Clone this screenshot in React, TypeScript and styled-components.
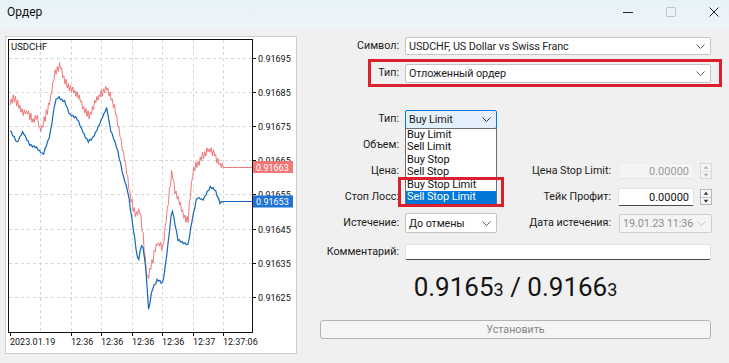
import styled, { createGlobalStyle } from "styled-components";

const GlobalStyle = createGlobalStyle`
  html, body {
    margin: 0;
    padding: 0;
    background: #f0f0f0;
  }
  body {
    font-family: Roboto, "Liberation Sans", Arial, sans-serif;
    font-size: 10.7px;
    color: #1b1b1b;
  }
`;

const Window = styled.div`
  width: 729px;
  height: 363px;
  overflow: hidden;
  background: #f0f0f0;
  display: flex;
  flex-direction: column;
`;

const TitleBar = styled.div`
  height: 30px;
  flex: none;
  display: flex;
  justify-content: space-between;
  align-items: flex-start;
  background: linear-gradient(#e5f1f8, #edf5f9 75%, #f0f2f3);
`;

const Title = styled.div`
  padding: 5px 0 0 7px;
  font-size: 12px;
  line-height: 14px;
  color: #111;
`;

const Controls = styled.div`
  display: flex;
  gap: 13px;
`;

const CtrlButton = styled.div`
  width: 30px;
  height: 24px;
  display: flex;
  align-items: center;
  justify-content: center;
`;

const Content = styled.div`
  display: flex;
  padding: 6px 0 0 5px;
`;

const ChartPanel = styled.div`
  width: 290px;
  height: 316px;
  flex: none;
  background: #fff;
  border: 1px solid #cdcdcd;
  svg {
    display: block;
  }
`;

const Form = styled.div`
  margin-left: 23px;
  width: 391px;
  display: flex;
  flex-direction: column;
`;

const Row = styled.div<{ $h: number; $mt?: number }>`
  display: flex;
  align-items: center;
  height: ${(p) => p.$h}px;
  margin-top: ${(p) => p.$mt ?? 0}px;
  position: relative;
`;

const RedFrame = styled.div`
  display: flex;
  align-items: center;
  box-sizing: border-box;
  height: 28px;
  margin: 3px -11px 0 48px;
  border: 3px solid #d9202c;
`;

const Label = styled.div<{ $w?: number; $gap?: number }>`
  width: ${(p) => p.$w ?? 79}px;
  flex: none;
  margin-right: ${(p) => p.$gap ?? 6}px;
  text-align: right;
  white-space: nowrap;
  line-height: 14px;
`;

type Variant = "normal" | "open" | "disabled";

const Select = styled.div<{ $w: number; $h?: number; $variant?: Variant }>`
  position: relative;
  width: ${(p) => p.$w}px;
  height: ${(p) => p.$h ?? 19}px;
  flex: none;
  box-sizing: border-box;
  display: flex;
  align-items: center;
  justify-content: space-between;
  padding: 0 5px 0 3px;
  border-radius: 2px;
  white-space: nowrap;
  border: 1px solid
    ${(p) =>
      p.$variant === "open" ? "#0078d7" : p.$variant === "disabled" ? "#cfcfcf" : "#c4c4c4"};
  background: ${(p) =>
    p.$variant === "open" ? "#e3effa" : p.$variant === "disabled" ? "#f4f4f4" : "#ffffff"};
  color: ${(p) => (p.$variant === "disabled" ? "#8e8e8e" : "#1b1b1b")};
  font-size: 10.8px;
  letter-spacing: -0.1px;
`;

const DropList = styled.div`
  position: absolute;
  top: 100%;
  left: -1px;
  width: 92px;
  box-sizing: border-box;
  border: 1px solid #6e6e6e;
  background: #fff;
  z-index: 2;
`;

const DropItem = styled.div<{ $active?: boolean }>`
  height: 12.5px;
  line-height: 12.5px;
  padding-left: 1px;
  font-size: 11px;
  color: ${(p) => (p.$active ? "#fff" : "#111")};
  background: ${(p) => (p.$active ? "#0078d7" : "transparent")};
`;

const Highlight = styled.div`
  position: absolute;
  left: -8px;
  top: 48px;
  width: 106px;
  height: 30px;
  box-sizing: border-box;
  border: 3px solid #d9202c;
  pointer-events: none;
`;

const Input = styled.div<{ $w: number; $h?: number; $disabled?: boolean }>`
  width: ${(p) => p.$w}px;
  height: ${(p) => p.$h ?? 18}px;
  flex: none;
  box-sizing: border-box;
  display: flex;
  align-items: center;
  justify-content: flex-end;
  padding-right: 4px;
  font-size: 11px;
  background: ${(p) => (p.$disabled ? "#f4f4f4" : "#fff")};
  color: ${(p) => (p.$disabled ? "#9a9a9a" : "#111")};
  border: 1px solid ${(p) => (p.$disabled ? "#ececec" : "#e2e2e2")};
  border-bottom-color: ${(p) => (p.$disabled ? "#e4e4e4" : "#4a4a4a")};
  border-radius: 2px;
`;

const Spinner = styled.div<{ $disabled?: boolean }>`
  width: 12px;
  height: 16px;
  margin-left: 6px;
  flex: none;
  box-sizing: border-box;
  display: flex;
  flex-direction: column;
  border: 1px solid ${(p) => (p.$disabled ? "#d8d8d8" : "#b8b8b8")};
  background: ${(p) => (p.$disabled ? "#f4f4f4" : "#f7f7f7")};
  svg {
    display: block;
    flex: 1;
  }
`;

const PriceLine = styled.div`
  margin-top: 7px;
  height: 30px;
  line-height: 30px;
  text-align: center;
  font-size: 26px;
  color: #141414;
`;

const SmallDigit = styled.span`
  font-size: 18px;
`;

const SubmitButton = styled.div`
  margin-top: 18px;
  height: 19px;
  box-sizing: border-box;
  border: 1px solid #b4b4b4;
  border-radius: 3px;
  background: #f5f5f5;
  color: #858585;
  display: flex;
  align-items: center;
  justify-content: center;
  font-size: 10.7px;
`;

function Chevron({ color = "#606060" }: { color?: string }) {
  return (
    <svg width="9" height="5" viewBox="0 0 9 5">
      <polyline points="0.5,0.5 4.5,4.5 8.5,0.5" fill="none" stroke={color} strokeWidth="1" />
    </svg>
  );
}

function SpinBox({ disabled }: { disabled?: boolean }) {
  const c = disabled ? "#b0b0b0" : "#333";
  return (
    <Spinner $disabled={disabled}>
      <svg viewBox="0 0 10 7">
        <polygon points="2.5,5 7.5,5 5,2" fill={c} />
      </svg>
      <svg viewBox="0 0 10 7" style={{ borderTop: `1px solid ${disabled ? "#dedede" : "#c6c6c6"}` }}>
        <polygon points="2.5,2 7.5,2 5,5" fill={c} />
      </svg>
    </Spinner>
  );
}

// ---- chart data ----
type Pt = [number, number];

const redKeys: Pt[] = [
  [10, 102], [15, 98], [20, 110], [27, 112], [33, 120], [37, 117], [40, 132], [45, 118],
  [50, 102], [55, 72], [60, 65], [65, 82], [70, 88], [75, 92], [80, 98], [85, 112],
  [90, 115], [97, 98], [103, 92], [107, 88], [110, 94], [113, 102], [117, 118], [120, 135],
  [125, 162], [130, 195], [135, 215], [140, 210], [143, 235], [147, 280], [152, 263],
  [157, 243], [163, 247], [167, 213], [172, 170], [175, 190], [180, 205], [185, 218],
  [188, 222], [190, 200], [193, 170], [200, 160], [207, 150], [213, 152], [220, 165], [223, 167],
];

const blueKeys: Pt[] = [
  [10, 130], [17, 142], [23, 132], [30, 145], [37, 148], [43, 155], [50, 135], [55, 102],
  [58, 97], [65, 102], [70, 115], [77, 118], [83, 132], [88, 142], [93, 138], [100, 123],
  [107, 107], [110, 128], [117, 148], [123, 175], [128, 192], [133, 227], [138, 262],
  [142, 243], [145, 260], [147, 283], [148, 313], [152, 290], [157, 280], [163, 283],
  [167, 253], [172, 208], [178, 240], [183, 243], [188, 245], [192, 220], [197, 197],
  [203, 200], [210, 187], [215, 190], [220, 203], [223, 201],
];

function interp(keys: Pt[], x: number) {
  for (let i = 1; i < keys.length; i++) {
    const [x0, y0] = keys[i - 1];
    const [x1, y1] = keys[i];
    if (x <= x1) return y0 + ((y1 - y0) * (x - x0)) / (x1 - x0);
  }
  return keys[keys.length - 1][1];
}

function linePath(keys: Pt[], amp: number, step: number, seed: number, endY: number) {
  let s = seed;
  const rnd = () => {
    s = (s * 1103515245 + 12345) & 0x7fffffff;
    return s / 0x7fffffff;
  };
  const pts: string[] = [];
  let i = 0;
  for (let x = 10; x < 223; x += step, i++) {
    const dir = i % 2 ? -1 : 1;
    const y = interp(keys, x) + dir * (0.3 + rnd()) * amp;
    pts.push(`${x.toFixed(1)},${y.toFixed(1)}`);
  }
  pts.push(`223,${endY}`, `253,${endY}`);
  return "M" + pts.join(" L");
}

const priceLevels = [
  { y: 58, t: "0.91695" },
  { y: 92, t: "0.91685" },
  { y: 126, t: "0.91675" },
  { y: 160, t: "0.91665" },
  { y: 194, t: "0.91655" },
  { y: 229, t: "0.91645" },
  { y: 263, t: "0.91635" },
  { y: 297, t: "0.91625" },
];

const vGrid = [40, 71, 101, 132, 162, 193, 223];

const timeLabels = [
  { x: 10, t: "2023.01.19" },
  { x: 71, t: "12:36" },
  { x: 101, t: "12:36" },
  { x: 132, t: "12:36" },
  { x: 162, t: "12:36" },
  { x: 193, t: "12:37" },
  { x: 223, t: "12:37:06" },
];

function Chart() {
  const font = "Roboto, 'Liberation Sans', sans-serif";
  return (
    <svg width={290} height={316} viewBox="6 37 290 316">
      {vGrid.map((x) => (
        <line key={x} x1={x + 0.5} y1={40} x2={x + 0.5} y2={332} stroke="#d6d6d6" strokeDasharray="3 3" />
      ))}
      {priceLevels.map((p) => (
        <line key={p.t} x1={9} y1={p.y + 0.5} x2={252} y2={p.y + 0.5} stroke="#d6d6d6" strokeDasharray="3 3" />
      ))}
      <path d={linePath(redKeys, 3.6, 1.1, 7, 167.5)} fill="none" stroke="#ec6b6b" strokeWidth={0.9} />
      <path d={linePath(blueKeys, 1, 1.4, 19, 201.5)} fill="none" stroke="#1566b8" strokeWidth={1.2} />
      <rect x={8.5} y={39.5} width={244} height={293} fill="none" stroke="#111" />
      {priceLevels.map((p) => (
        <g key={p.t}>
          <line x1={252.5} y1={p.y + 0.5} x2={256} y2={p.y + 0.5} stroke="#111" />
          <text x={258} y={p.y + 3.5} fontSize={9} fontFamily={font} fill="#111">
            {p.t}
          </text>
        </g>
      ))}
      {timeLabels.map((l) => (
        <g key={l.x}>
          <line x1={l.x + 0.5} y1={332} x2={l.x + 0.5} y2={336} stroke="#111" />
          <text x={l.x} y={345} fontSize={9} fontFamily={font} fill="#111">
            {l.t}
          </text>
        </g>
      ))}
      <rect x={253} y={161} width={40} height={12} fill="#f27777" />
      <text x={256} y={170.5} fontSize={9} fontFamily={font} fill="#fff">
        0.91663
      </text>
      <rect x={253} y={195.5} width={40} height={12} fill="#1f72d6" />
      <text x={256} y={205} fontSize={9} fontFamily={font} fill="#fff">
        0.91653
      </text>
      <text x={11} y={50} fontSize={9.5} fontFamily={font} fill="#111">
        USDCHF
      </text>
    </svg>
  );
}

export default function App() {
  return (
    <Window>
      <GlobalStyle />
      <TitleBar>
        <Title>Ордер</Title>
        <Controls>
          <CtrlButton>
            <svg width="10" height="10" viewBox="0 0 10 10">
              <line x1="0" y1="5.5" x2="10" y2="5.5" stroke="#222" />
            </svg>
          </CtrlButton>
          <CtrlButton>
            <svg width="10" height="10" viewBox="0 0 10 10">
              <rect x="0.5" y="0.5" width="9" height="9" rx="1" fill="none" stroke="#c2c2c2" />
            </svg>
          </CtrlButton>
          <CtrlButton>
            <svg width="10" height="10" viewBox="0 0 10 10">
              <path d="M0.5 0.5 L9.5 9.5 M9.5 0.5 L0.5 9.5" stroke="#222" />
            </svg>
          </CtrlButton>
        </Controls>
      </TitleBar>

      <Content>
        <ChartPanel>
          <Chart />
        </ChartPanel>

        <Form>
          <Row $h={20}>
            <Label>Символ:</Label>
            <Select $w={306} $h={18}>
              USDCHF, US Dollar vs Swiss Franc
              <Chevron />
            </Select>
          </Row>

          <RedFrame>
            <Label $w={28}>Тип:</Label>
            <Select $w={306}>
              Отложенный ордер
              <Chevron />
            </Select>
          </RedFrame>

          <Row $h={22} $mt={21}>
            <Label>Тип:</Label>
            <Select $w={92} $variant="open">
              Buy Limit
              <Chevron color="#3a3a3a" />
              <DropList>
                <DropItem>Buy Limit</DropItem>
                <DropItem>Sell Limit</DropItem>
                <DropItem>Buy Stop</DropItem>
                <DropItem>Sell Stop</DropItem>
                <DropItem>Buy Stop Limit</DropItem>
                <DropItem $active>Sell Stop Limit</DropItem>
                <Highlight />
              </DropList>
            </Select>
          </Row>

          <Row $h={26} $mt={2}>
            <Label>Объем:</Label>
            <Input $w={92} $h={16} />
          </Row>

          <Row $h={26}>
            <Label>Цена:</Label>
            <Input $w={92} $h={16} />
            <Label $w={114} $gap={7}>Цена Stop Limit:</Label>
            <Input $w={76} $h={16} $disabled>
              0.00000
            </Input>
            <SpinBox disabled />
          </Row>

          <Row $h={26}>
            <Label>Стоп Лосс:</Label>
            <Input $w={92} $h={16} />
            <Label $w={114} $gap={7}>Тейк Профит:</Label>
            <Input $w={76}>0.00000</Input>
            <SpinBox />
          </Row>

          <Row $h={26}>
            <Label>Истечение:</Label>
            <Select $w={92} $h={20}>
              До отмены
              <Chevron />
            </Select>
            <Label $w={114} $gap={8}>Дата истечения:</Label>
            <Select $w={93} $variant="disabled">
              19.01.23 11:36
              <Chevron color="#c4c4c4" />
            </Select>
          </Row>

          <Row $h={26} $mt={3}>
            <Label>Комментарий:</Label>
            <Input $w={306} $h={16} />
          </Row>

          <PriceLine>
            0.9165<SmallDigit>3</SmallDigit> / 0.9166<SmallDigit>3</SmallDigit>
          </PriceLine>

          <SubmitButton>Установить</SubmitButton>
        </Form>
      </Content>
    </Window>
  );
}
